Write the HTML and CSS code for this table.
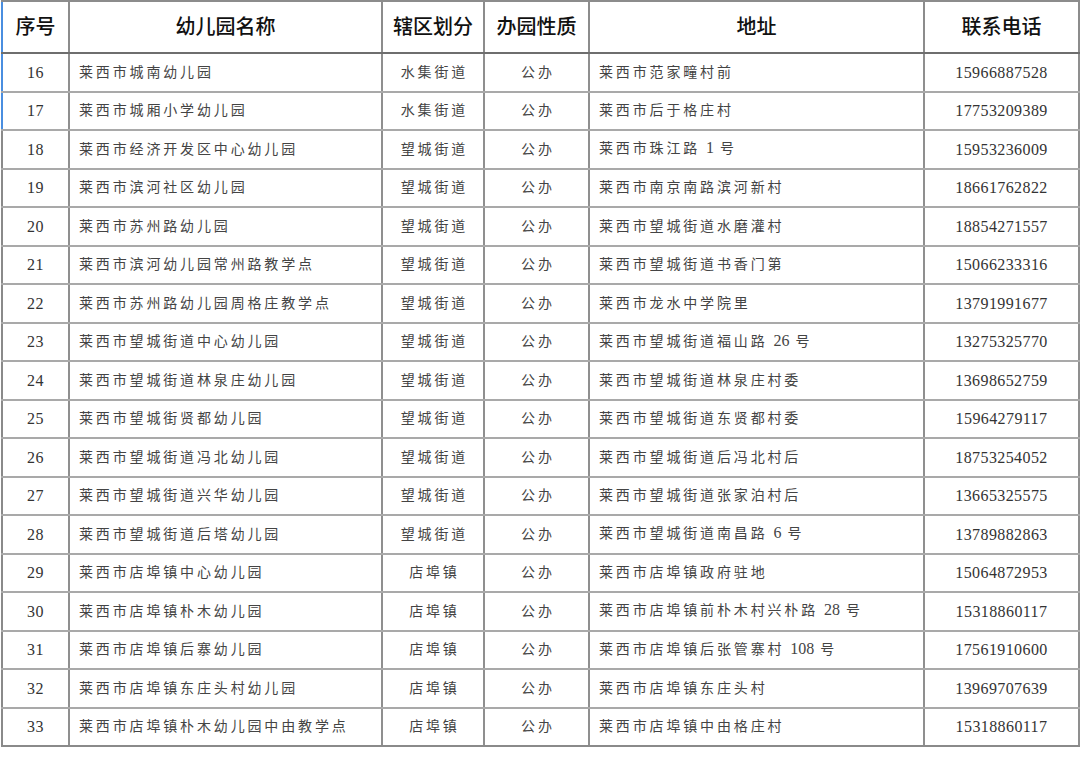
FILE: index.html
```html
<!DOCTYPE html>
<html lang="zh-CN">
<head>
<meta charset="utf-8">
<title>幼儿园名单</title>
<link rel="stylesheet" href="styles.css">
</head>
<body>
<table class="list">
  <colgroup>
    <col class="c-no"><col class="c-name"><col class="c-area"><col class="c-type"><col class="c-addr"><col class="c-tel">
  </colgroup>
  <thead>
    <tr class="head blue">
      <th>序号</th><th>幼儿园名称</th><th>辖区划分</th><th>办园性质</th><th>地址</th><th>联系电话</th>
    </tr>
  </thead>
  <tbody>
    <tr class="blue"><td class="num">16</td><td class="txt">莱西市城南幼儿园</td><td class="ctr">水集街道</td><td class="ctr">公办</td><td class="txt">莱西市范家疃村前</td><td class="num">15966887528</td></tr>
    <tr class="blue"><td class="num">17</td><td class="txt">莱西市城厢小学幼儿园</td><td class="ctr">水集街道</td><td class="ctr">公办</td><td class="txt">莱西市后于格庄村</td><td class="num">17753209389</td></tr>
    <tr><td class="num">18</td><td class="txt">莱西市经济开发区中心幼儿园</td><td class="ctr">望城街道</td><td class="ctr">公办</td><td class="txt">莱西市珠江路 <span class="d">1</span> 号</td><td class="num">15953236009</td></tr>
    <tr><td class="num">19</td><td class="txt">莱西市滨河社区幼儿园</td><td class="ctr">望城街道</td><td class="ctr">公办</td><td class="txt">莱西市南京南路滨河新村</td><td class="num">18661762822</td></tr>
    <tr><td class="num">20</td><td class="txt">莱西市苏州路幼儿园</td><td class="ctr">望城街道</td><td class="ctr">公办</td><td class="txt">莱西市望城街道水磨灌村</td><td class="num">18854271557</td></tr>
    <tr><td class="num">21</td><td class="txt">莱西市滨河幼儿园常州路教学点</td><td class="ctr">望城街道</td><td class="ctr">公办</td><td class="txt">莱西市望城街道书香门第</td><td class="num">15066233316</td></tr>
    <tr><td class="num">22</td><td class="txt">莱西市苏州路幼儿园周格庄教学点</td><td class="ctr">望城街道</td><td class="ctr">公办</td><td class="txt">莱西市龙水中学院里</td><td class="num">13791991677</td></tr>
    <tr><td class="num">23</td><td class="txt">莱西市望城街道中心幼儿园</td><td class="ctr">望城街道</td><td class="ctr">公办</td><td class="txt">莱西市望城街道福山路 <span class="d">26</span> 号</td><td class="num">13275325770</td></tr>
    <tr><td class="num">24</td><td class="txt">莱西市望城街道林泉庄幼儿园</td><td class="ctr">望城街道</td><td class="ctr">公办</td><td class="txt">莱西市望城街道林泉庄村委</td><td class="num">13698652759</td></tr>
    <tr><td class="num">25</td><td class="txt">莱西市望城街贤都幼儿园</td><td class="ctr">望城街道</td><td class="ctr">公办</td><td class="txt">莱西市望城街道东贤都村委</td><td class="num">15964279117</td></tr>
    <tr><td class="num">26</td><td class="txt">莱西市望城街道冯北幼儿园</td><td class="ctr">望城街道</td><td class="ctr">公办</td><td class="txt">莱西市望城街道后冯北村后</td><td class="num">18753254052</td></tr>
    <tr><td class="num">27</td><td class="txt">莱西市望城街道兴华幼儿园</td><td class="ctr">望城街道</td><td class="ctr">公办</td><td class="txt">莱西市望城街道张家泊村后</td><td class="num">13665325575</td></tr>
    <tr><td class="num">28</td><td class="txt">莱西市望城街道后塔幼儿园</td><td class="ctr">望城街道</td><td class="ctr">公办</td><td class="txt">莱西市望城街道南昌路 <span class="d">6</span> 号</td><td class="num">13789882863</td></tr>
    <tr><td class="num">29</td><td class="txt">莱西市店埠镇中心幼儿园</td><td class="ctr">店埠镇</td><td class="ctr">公办</td><td class="txt">莱西市店埠镇政府驻地</td><td class="num">15064872953</td></tr>
    <tr><td class="num">30</td><td class="txt">莱西市店埠镇朴木幼儿园</td><td class="ctr">店埠镇</td><td class="ctr">公办</td><td class="txt">莱西市店埠镇前朴木村兴朴路 <span class="d">28</span> 号</td><td class="num">15318860117</td></tr>
    <tr><td class="num">31</td><td class="txt">莱西市店埠镇后寨幼儿园</td><td class="ctr">店埠镇</td><td class="ctr">公办</td><td class="txt">莱西市店埠镇后张管寨村 <span class="d">108</span> 号</td><td class="num">17561910600</td></tr>
    <tr><td class="num">32</td><td class="txt">莱西市店埠镇东庄头村幼儿园</td><td class="ctr">店埠镇</td><td class="ctr">公办</td><td class="txt">莱西市店埠镇东庄头村</td><td class="num">13969707639</td></tr>
    <tr><td class="num">33</td><td class="txt">莱西市店埠镇朴木幼儿园中由教学点</td><td class="ctr">店埠镇</td><td class="ctr">公办</td><td class="txt">莱西市店埠镇中由格庄村</td><td class="num">15318860117</td></tr>
  </tbody>
</table>
</body>
</html>
```
FILE: styles.css
```css
html, body {
  margin: 0;
  padding: 0;
  background: #ffffff;
}
body {
  padding: 0 0 0 1px;
  font-family: "Noto Sans CJK SC", sans-serif;
}
.list {
  border-collapse: collapse;
  table-layout: fixed;
  width: 1077px;
}
.c-no { width: 67px; }
.c-name { width: 313px; }
.c-area { width: 102px; }
.c-type { width: 105px; }
.c-addr { width: 335px; }
.c-tel { width: 155px; }

.list th, .list td {
  border: 2px solid #a9a9a9;
  padding: 0;
  overflow: hidden;
  white-space: nowrap;
  line-height: 20px;
}
.list th {
  height: 48px;
  padding-bottom: 2px;
  font-size: 20px;
  font-weight: 500;
  color: #111;
  text-align: center;
  border-top-color: #8c8c8c;
  border-bottom-color: #6e6e6e;
  border-left-color: #8c8c8c;
  border-right-color: #8c8c8c;
}
.list td {
  height: 33.5px;
  font-size: 14px;
  color: #444;
  border-left-color: #8f8f8f;
  border-right-color: #8f8f8f;
}
.list tbody tr:last-child td {
  border-bottom-color: #8a8a8a;
}
.list tr > :first-child {
  border-left-color: #8a8a8a;
}
.list tr.blue > :first-child {
  border-left-color: #4a8ee0;
}
.list td.num {
  text-align: center;
  font-family: "Liberation Serif", serif;
  font-size: 16px;
  letter-spacing: 0.4px;
  padding-top: 1px;
  color: #333;
}
.list td.ctr {
  text-align: center;
  letter-spacing: 2.8px;
  text-indent: 2.8px;
  padding-bottom: 3px;
}
.list td.txt {
  text-align: left;
  padding-left: 9px;
  padding-bottom: 3px;
  letter-spacing: 2.85px;
}
.d {
  font-family: "Liberation Serif", serif;
  font-size: 16px;
  letter-spacing: 0;
}
```
